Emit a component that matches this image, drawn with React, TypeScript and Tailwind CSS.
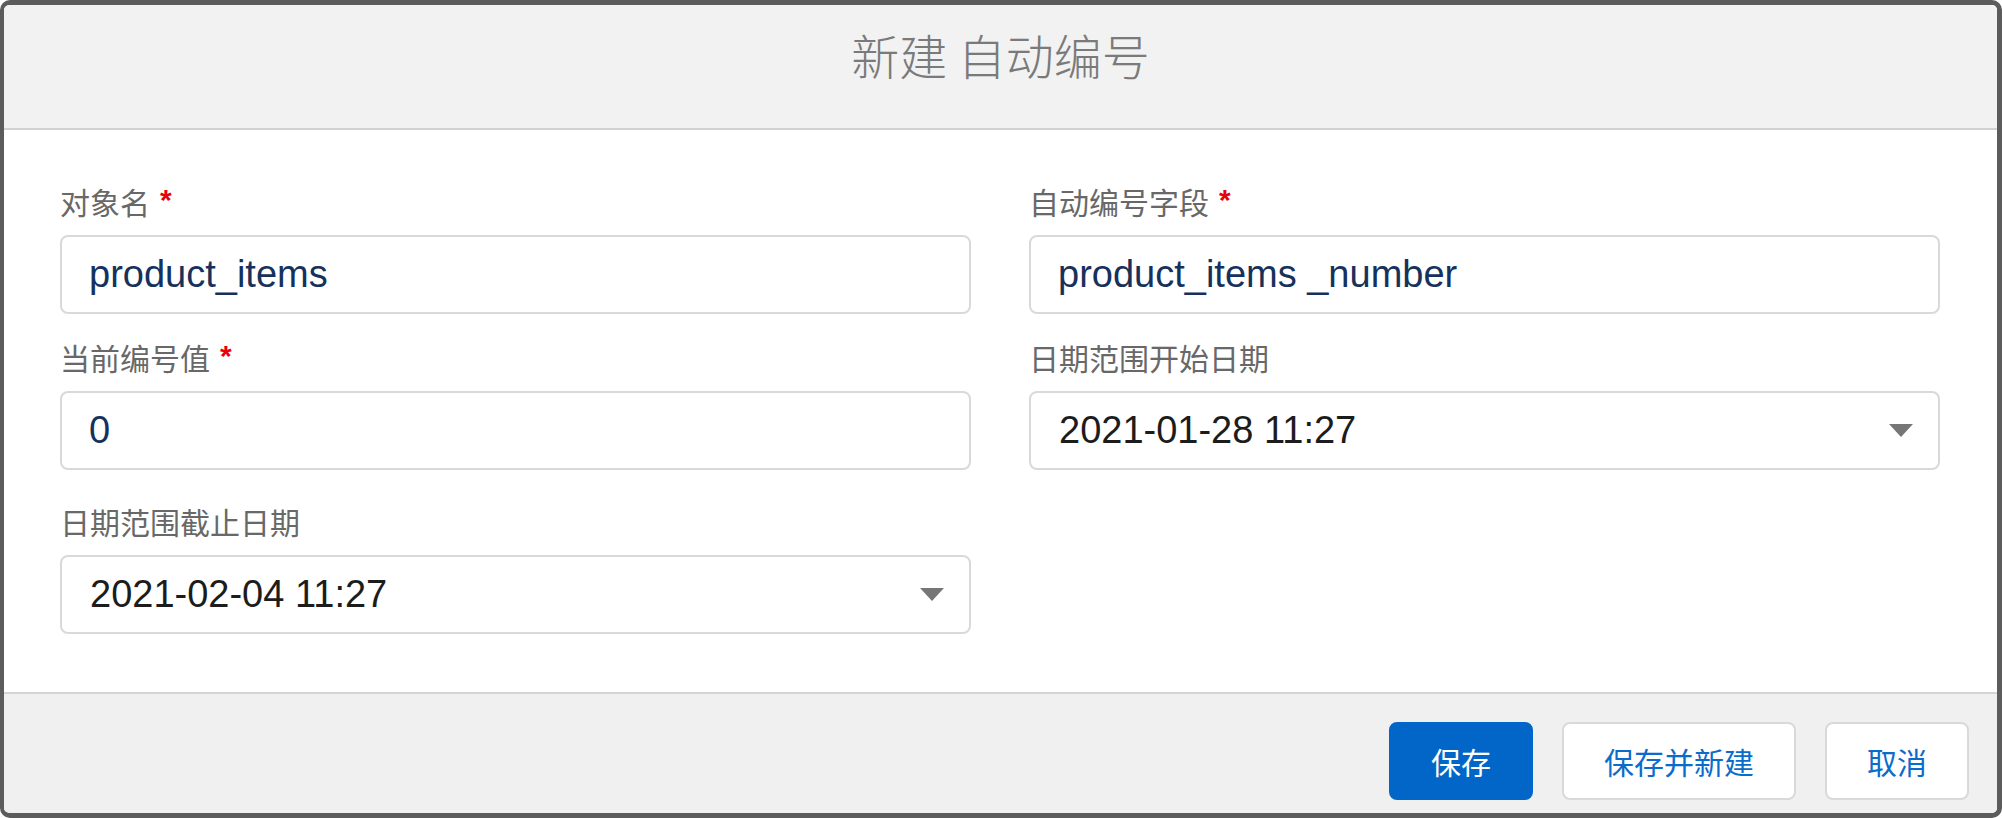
import React from "react";

const cjk = "font-['Noto_Sans_CJK_SC','Liberation_Sans',sans-serif]";
const latin = "font-['Liberation_Sans','Noto_Sans_CJK_SC',sans-serif]";

function Label({ text, required }: { text: string; required?: boolean }) {
  return (
    <div className={`${cjk} mb-[16px] flex h-[36px] items-center text-[30px] leading-[36px] text-[#686868]`}>
      <span>{text}</span>
      {required && (
        <span className={`${latin} ml-[10px] self-start pt-[2px] text-[30px] font-bold leading-[30px] text-[#e8000b]`}>
          *
        </span>
      )}
    </div>
  );
}

function TextField({ label, value, required }: { label: string; value: string; required?: boolean }) {
  return (
    <div>
      <Label text={label} required={required} />
      <div className="flex h-[79px] items-center rounded-[8px] border-2 border-[#d9d9d9] bg-white pl-[27px]">
        <span className={`${latin} text-[38px] text-[#16325c]`}>{value}</span>
      </div>
    </div>
  );
}

function DateField({ label, value, className = "" }: { label: string; value: string; className?: string }) {
  return (
    <div className={className}>
      <Label text={label} />
      <div className="flex h-[79px] items-center justify-between rounded-[8px] border-2 border-[#d9d9d9] bg-white pl-[28px] pr-[25px]">
        <span className={`${latin} text-[38px] text-[#1c1c1c]`}>{value}</span>
        <svg width="24" height="13" viewBox="0 0 24 13">
          <polygon points="0,0 24,0 12,13" fill="#767676" />
        </svg>
      </div>
    </div>
  );
}

export default function App() {
  return (
    <div className="h-screen w-full bg-white">
      <div className="flex h-full flex-col overflow-hidden rounded-[10px] border-[5px] border-l-4 border-[#5c5c5c]">
        {/* Header */}
        <div className="h-[125px] shrink-0 border-b-2 border-[#d2d2d6] bg-[#f2f2f2] pt-[20px] text-center">
          <h1 className={`${cjk} text-[48px] font-light leading-[58px] text-[#7a7a7a]`}>新建 自动编号</h1>
        </div>

        {/* Body */}
        <div className="flex-1 bg-white pl-[56px] pr-[57px] pt-[53px]">
          <div className="grid grid-cols-2 gap-x-[58px] gap-y-[25px]">
            <TextField label="对象名" value="product_items" required />
            <TextField label="自动编号字段" value="product_items _number" required />
            <TextField label="当前编号值" value="0" required />
            <DateField label="日期范围开始日期" value="2021-01-28 11:27" />
            <DateField label="日期范围截止日期" value="2021-02-04 11:27" className="mt-[8px]" />
          </div>
        </div>

        {/* Footer */}
        <div className={`${cjk} flex shrink-0 justify-end gap-[29px] border-t-2 border-[#d4d4d4] bg-[#f0f0f0] pb-[13px] pr-[28px] pt-[28px] text-[30px]`}>
          <button className="h-[78px] rounded-[8px] border-2 border-[#0266c8] bg-[#0266c8] px-[40px] text-white">
            保存
          </button>
          <button className="h-[78px] rounded-[8px] border-2 border-[#d9d9d9] bg-white px-[40px] text-[#0a6ccb]">
            保存并新建
          </button>
          <button className="h-[78px] rounded-[8px] border-2 border-[#d9d9d9] bg-white px-[40px] text-[#0a6ccb]">
            取消
          </button>
        </div>
      </div>
    </div>
  );
}
